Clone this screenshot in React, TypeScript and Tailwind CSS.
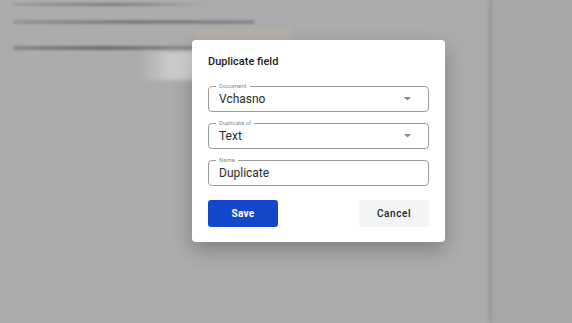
import { useState } from 'react';

type FieldProps = { label: string; value: string; select?: boolean };

function OutlinedField({ label, value, select }: FieldProps) {
  return (
    <div className="relative flex h-[26px] items-center rounded-[4px] border border-[#9b9b9b] pl-[10px] pr-[12px]">
      <span className="absolute -top-[5px] left-[7px] bg-white px-[3px] text-[6px] leading-[8px] text-[#8a8a8a]">
        {label}
      </span>
      <span className="flex-1 text-[12px] leading-none text-[#2a2a2a]">{value}</span>
      {select && (
        <svg width="7" height="4" viewBox="0 0 7 4" className="mr-[5px]">
          <path d="M0 0h7L3.5 3.5z" fill="#888" />
        </svg>
      )}
    </div>
  );
}

export default function App() {
  const [name] = useState('Duplicate');

  return (
    <div className="relative flex h-[323px] w-[572px] overflow-hidden bg-[#acacac] font-['Roboto',sans-serif]">
      <div className="flex flex-1 flex-col pl-[13px] pt-[3px]">
        <div className="h-[3px] w-[197px] bg-gradient-to-r from-[#9d9d9d] via-[#7c7c7c] to-[#acacac] blur-[1px]" />
        <div className="mt-[14px] h-[4px] w-[241px] bg-gradient-to-r from-[#979797] via-[#7d7d7d] to-[#898989] blur-[1px]" />
        <div className="ml-[183px] mt-[5px] h-[13px] w-[96px] bg-[#b6b0a6] blur-[1px]" />
        <div className="mt-[4px] h-[4px] w-[180px] bg-gradient-to-r from-[#8a8a8a] via-[#6f6f6f] to-[#8d8d8d] blur-[1px]" />
        <div className="ml-[127px] mt-[2px] h-[28px] w-[56px] bg-gradient-to-r from-[#acacac] via-[#c9c9c9] to-[#d6d6d6] blur-[2px]" />
      </div>
      <div className="w-[81px] border-l border-[#999] bg-[#a7a7a7] shadow-[-2px_0_4px_rgba(0,0,0,0.12)]" />

      <div className="absolute left-[192px] top-[40px] flex w-[253px] flex-col rounded-[4px] bg-white px-[16px] pb-[15px] pt-[14px] shadow-[0_8px_20px_rgba(0,0,0,0.25)]">
        <h2 className="text-[11px] font-medium leading-[16px] text-[#1c1c1c]">Duplicate field</h2>
        <div className="mt-[16px] flex flex-col gap-[11px]">
          <OutlinedField label="Document" value="Vchasno" select />
          <OutlinedField label="Duplicate of" value="Text" select />
          <OutlinedField label="Name" value={name} />
        </div>
        <div className="mt-[14px] flex justify-between">
          <button className="h-[27px] w-[70px] rounded-[3px] bg-[#1447cc] text-[10px] font-bold tracking-[0.3px] text-white">
            Save
          </button>
          <button className="h-[27px] w-[70px] rounded-[3px] bg-[#f3f4f6] text-[10px] font-medium tracking-[0.6px] text-[#222]">
            Cancel
          </button>
        </div>
      </div>
    </div>
  );
}
